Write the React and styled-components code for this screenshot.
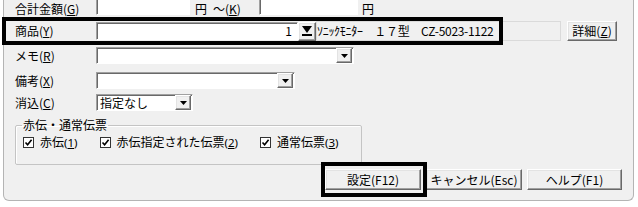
import React from 'react';
import styled, { createGlobalStyle } from 'styled-components';

//------------- Styling -------------//

const GlobalStyle = createGlobalStyle`
  body {
    margin: 0;
    background: #ffffff;
    font-family: "Noto Sans CJK JP", "Noto Sans", sans-serif;
    font-size: 12px;
    line-height: 14px;
    color: #000;
    text-autospace: no-autospace;
  }
`;

const Frame = styled.div`
  box-sizing: border-box;
  width: 631px;
  height: 201px;
  margin-left: 3px;
  background: #f0f0f0;
  border: 1px solid #b4b4b4;
  border-top: none;
  border-radius: 0 0 6px 6px;
  display: flex;
  flex-direction: column;
`;

const Row = styled.div`
  display: flex;
  align-items: center;
  height: ${(p) => p.$h}px;
  margin-top: ${(p) => p.$mt || 0}px;
`;

const Label = styled.div`
  box-sizing: border-box;
  width: 92px;
  padding-left: 11px;
  white-space: nowrap;
  flex-shrink: 0;
`;

const Mn = styled.u`
  text-decoration: underline;
  text-underline-offset: 1px;
`;

// latin run for "(1)" style mnemonics, keeps the digits narrow
const Key = styled.span`
  font-family: "Noto Sans", "DejaVu Sans", sans-serif;
  font-size: 11.5px;
`;

const Text = styled.span`
  white-space: nowrap;
  margin-left: ${(p) => p.$ml || 0}px;
  width: ${(p) => (p.$w ? `${p.$w}px` : 'auto')};
  flex-shrink: 0;
`;

const Field = styled.div`
  box-sizing: border-box;
  width: ${(p) => p.$w}px;
  height: ${(p) => p.$h}px;
  align-self: ${(p) => (p.$cut ? 'flex-start' : 'center')};
  background: #fff;
  border: 1px solid;
  border-color: #a0a0a0 #ffffff #ffffff #a0a0a0;
  border-top-width: ${(p) => (p.$cut ? 0 : 1)}px;
  box-shadow: inset 1px ${(p) => (p.$cut ? 0 : 1)}px 0 #696969;
  display: flex;
  align-items: center;
  justify-content: ${(p) => (p.$right ? 'flex-end' : 'flex-start')};
  padding: 0 ${(p) => (p.$right ? 5 : 3)}px 0 3px;
  flex-shrink: 0;
  white-space: nowrap;
`;

const Combo = styled(Field)`
  padding: 0 1px 0 3px;
  justify-content: space-between;
`;

const ReadOnly = styled.div`
  box-sizing: border-box;
  width: ${(p) => p.$w}px;
  height: 20px;
  border: 1px solid #dadada;
  display: flex;
  align-items: center;
  white-space: nowrap;
  letter-spacing: -0.3px;
  flex-shrink: 0;
`;

const raised = `
  background: #f0f0f0;
  border: 1px solid;
  border-color: #ffffff #696969 #696969 #ffffff;
  box-shadow: inset -1px -1px 0 #a0a0a0, inset 1px 1px 0 #e3e3e3;
`;

const DropButton = styled.div`
  box-sizing: border-box;
  width: ${(p) => p.$w || 16}px;
  height: ${(p) => p.$h || 15}px;
  ${raised}
  display: flex;
  align-items: center;
  justify-content: center;
  flex-shrink: 0;
`;

const Button = styled.div`
  box-sizing: border-box;
  position: relative;
  width: ${(p) => p.$w}px;
  height: ${(p) => p.$h || 21}px;
  margin-left: ${(p) => p.$ml || 0}px;
  ${raised}
  display: flex;
  align-items: center;
  justify-content: center;
  white-space: nowrap;
  flex-shrink: 0;
`;

const ProductBlock = styled.div`
  position: relative;
  height: 28px;
`;

const Highlight = styled.div`
  position: absolute;
  box-sizing: border-box;
  border: 4px solid #000;
  top: ${(p) => p.$t}px;
  left: ${(p) => p.$l}px;
  width: ${(p) => p.$w}px;
  height: ${(p) => p.$h}px;
  pointer-events: none;
  z-index: 2;
`;

const Group = styled.fieldset`
  box-sizing: border-box;
  width: 347px;
  height: 47px;
  margin: 7px 0 0 11px;
  padding: 0 0 0 6px;
  border: 1px solid #c4c4c4;
  border-radius: 2px;
  box-shadow: inset 1px 1px 0 #ffffff;
`;

const Legend = styled.legend`
  padding: 0 1px;
  line-height: 14px;
`;

const CheckRow = styled.div`
  display: flex;
  align-items: center;
  gap: 22px;
  height: 20px;
  padding-left: 1px;
`;

const CheckItem = styled.label`
  display: flex;
  align-items: center;
  gap: 6px;
  white-space: nowrap;
`;

const Box = styled.span`
  box-sizing: border-box;
  width: 11px;
  height: 11px;
  background: #fff;
  border: 1px solid #333;
  display: flex;
  align-items: center;
  justify-content: center;
`;

const ButtonBar = styled.div`
  display: flex;
  margin-top: 4px;
  padding-left: 321px;
`;

//------------- Icons -------------//

const Arrow = () => (
  <svg width="7" height="4" viewBox="0 0 7 4">
    <polygon points="0,0 7,0 3.5,4" fill="#000" />
  </svg>
);

const ArrowBar = () => (
  <svg width="10" height="12" viewBox="0 0 10 12">
    <polygon points="0,1 10,1 5,8" fill="#000" />
    <rect x="0" y="9" width="10" height="2" fill="#000" />
  </svg>
);

const Check = ({ label, k }) => (
  <CheckItem>
    <Box>
      <svg width="9" height="9" viewBox="0 0 9 9">
        <path d="M1.5 4.5 L3.6 6.8 L7.6 1.8" fill="none" stroke="#000" strokeWidth="1.6" />
      </svg>
    </Box>
    <span>
      {label}
      <Key>
        (<Mn>{k}</Mn>)
      </Key>
    </span>
  </CheckItem>
);

//------------- Component -------------//

export default function App() {
  return (
    <>
      <GlobalStyle />
      <Frame>
        <Row $h={17}>
          <Label>合計金額(<Mn>G</Mn>)</Label>
          <Field $w={94} $h={15} $cut />
          <Text $ml={5} $w={64}>円&ensp;～(<Mn>K</Mn>)</Text>
          <Field $w={99} $h={15} $cut />
          <Text $ml={4}>円</Text>
        </Row>

        <ProductBlock>
          <Highlight $t={0} $l={-2} $w={501} $h={28} />
          <Row $h={28}>
            <Label>商品(<Mn>Y</Mn>)</Label>
            <Field $w={202} $h={18} $right>1</Field>
            <DropButton $w={18} $h={19}>
              <ArrowBar />
            </DropButton>
            <ReadOnly $w={245}>ｿﾆｯｸﾓﾆﾀｰ　１７型　CZ-5023-1122</ReadOnly>
            <Button $w={50} $h={20} $ml={6}>詳細(<Mn>Z</Mn>)</Button>
          </Row>
        </ProductBlock>

        <Row $h={17} $mt={2}>
          <Label>メモ(<Mn>R</Mn>)</Label>
          <Combo $w={258} $h={17}>
            <span />
            <DropButton>
              <Arrow />
            </DropButton>
          </Combo>
        </Row>

        <Row $h={17} $mt={8}>
          <Label>備考(<Mn>X</Mn>)</Label>
          <Combo $w={199} $h={17}>
            <span />
            <DropButton>
              <Arrow />
            </DropButton>
          </Combo>
        </Row>

        <Row $h={17} $mt={5}>
          <Label>消込(<Mn>C</Mn>)</Label>
          <Combo $w={97} $h={17}>
            <span>指定なし</span>
            <DropButton>
              <Arrow />
            </DropButton>
          </Combo>
        </Row>

        <Group>
          <Legend>赤伝・通常伝票</Legend>
          <CheckRow>
            <Check label="赤伝" k="1" />
            <Check label="赤伝指定された伝票" k="2" />
            <Check label="通常伝票" k="3" />
          </CheckRow>
        </Group>

        <ButtonBar>
          <Button $w={96}>
            <Highlight $t={-8} $l={-5} $w={106} $h={35} />
            設定(F12)
          </Button>
          <Button $w={96} $ml={5}>キャンセル(Esc)</Button>
          <Button $w={95} $ml={5}>ヘルプ(F1)</Button>
        </ButtonBar>
      </Frame>
    </>
  );
}
